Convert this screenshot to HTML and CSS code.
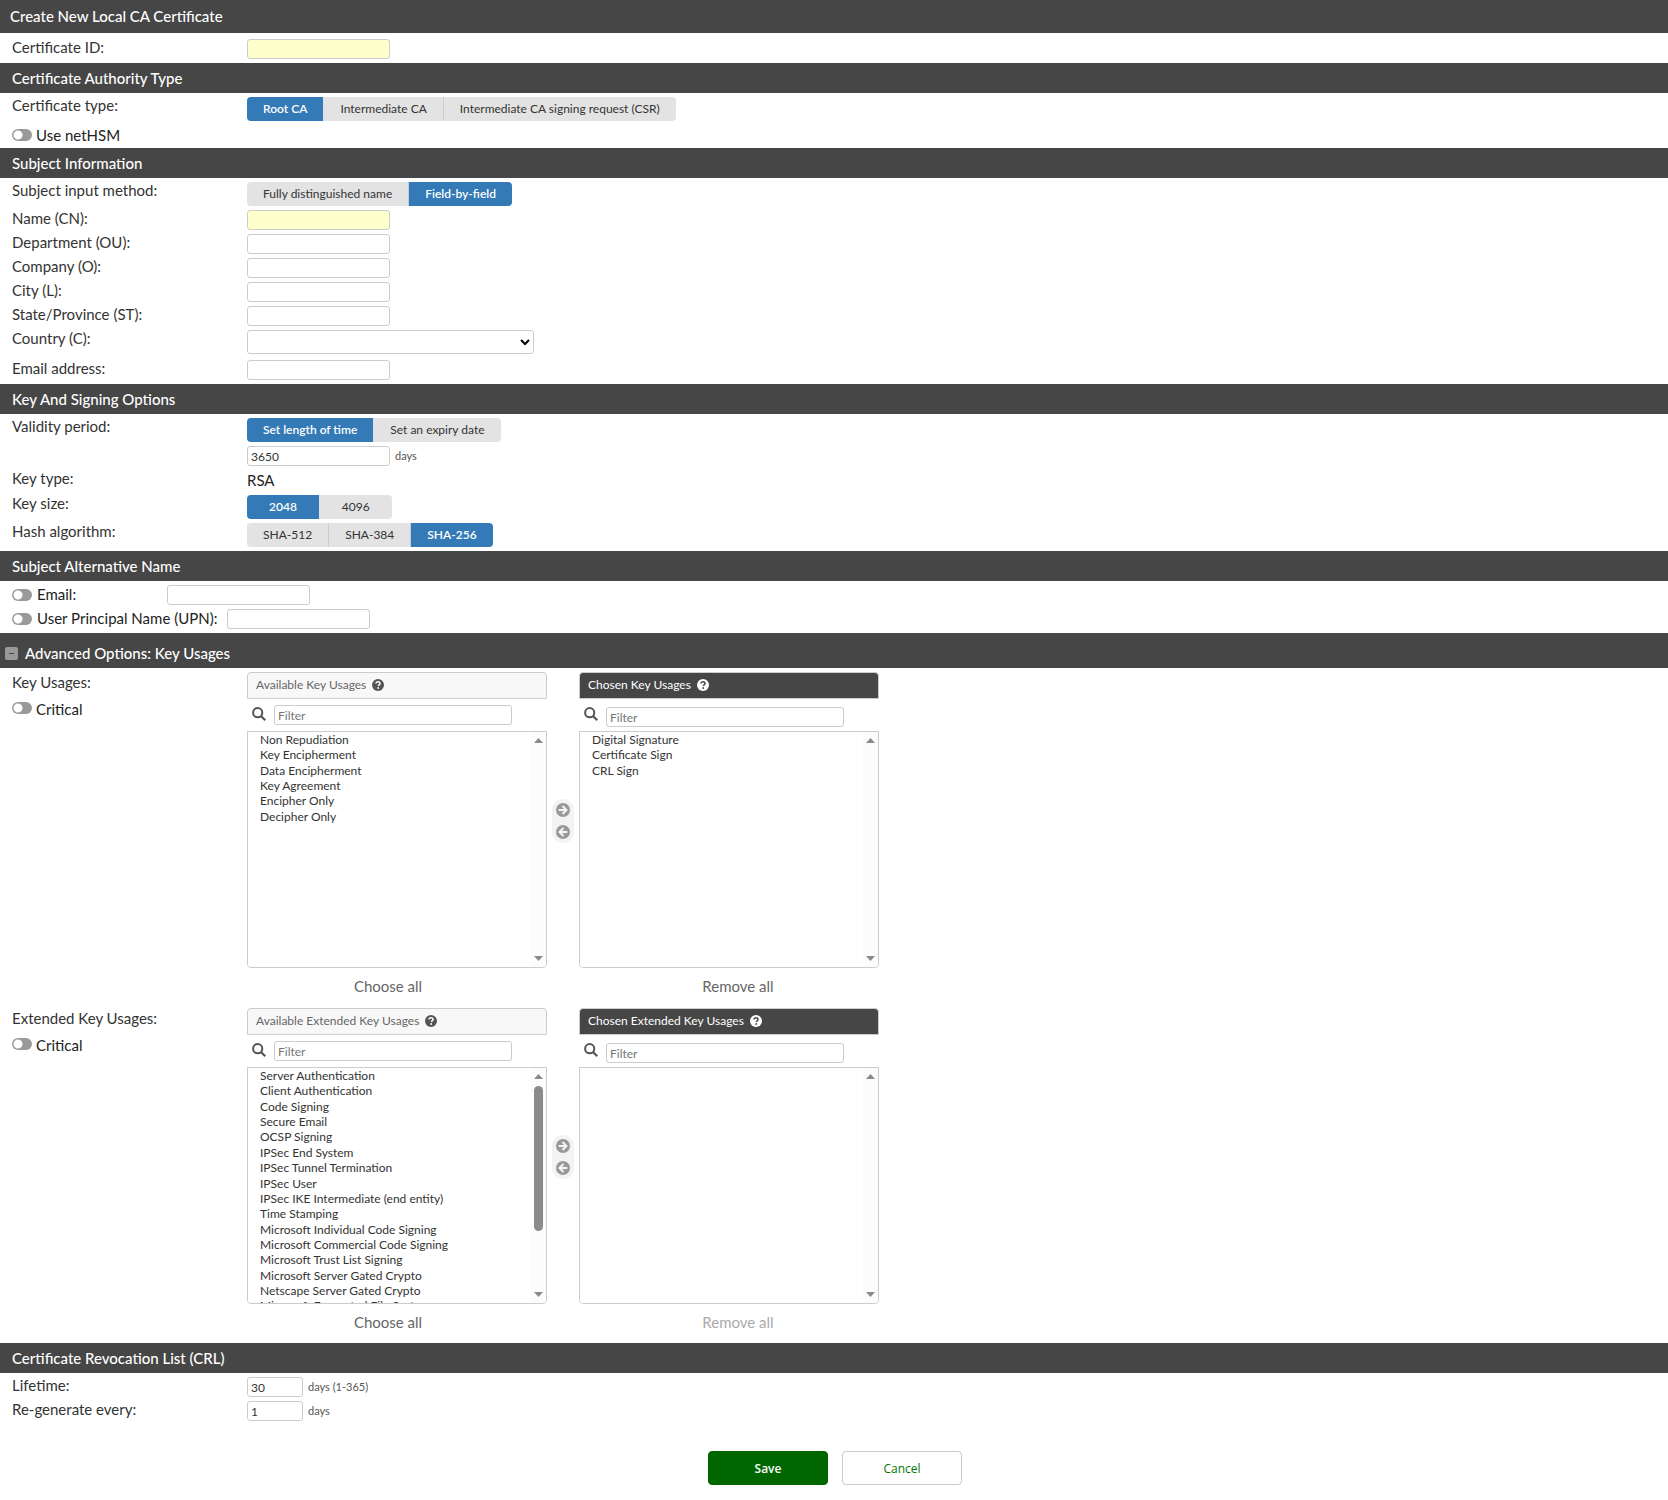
FILE: index.html
```html
<!DOCTYPE html>
<html lang="en">
<head>
<meta charset="utf-8">
<title>Create New Local CA Certificate</title>
<link rel="stylesheet" href="styles.css">
</head>
<body>
<svg class="sprite" aria-hidden="true">
  <symbol id="help" viewBox="0 0 12 12"><circle cx="6" cy="6" r="6" fill="currentColor"/><path class="help-mark" d="M4 4.6C4 3.4 4.9 2.8 6 2.8s2 .7 2 1.8C8 5.8 6.3 5.900 6.300 7.100" fill="none" stroke-width="1.500"/><circle class="help-dot" cx="6.200" cy="9" r=".9"/></symbol>
  <symbol id="search" viewBox="0 0 14 14"><circle cx="5.700" cy="5.700" r="4.600" fill="none" stroke="currentColor" stroke-width="2"/><path d="M9 9l4.200 4.200" stroke="currentColor" stroke-width="2.200"/></symbol>
  <symbol id="arrow" viewBox="0 0 14 14"><circle cx="7" cy="7" r="7" fill="currentColor"/><path d="M2.600 7h7.400M6.500 3L10.500 7l-4 4" fill="none" stroke="#f5f5f5" stroke-width="2"/></symbol>
  <symbol id="triangle" viewBox="0 0 9 5"><path d="M0 5L4.500 0 9 5z" fill="currentColor"/></symbol>
</svg>
<form>
  <h1 class="title">Create New Local CA Certificate</h1>
  <section class="fields fields-first">
    <div class="row"><label class="label" for="cert-id">Certificate ID:</label><input class="text required" id="cert-id" type="text"></div>
  </section>

  <h2 class="heading">Certificate Authority Type</h2>
  <section class="fields">
    <div class="row"><span class="label">Certificate type:</span>
      <div class="segments"><button type="button" class="segment on">Root CA</button><button type="button" class="segment">Intermediate CA</button><button type="button" class="segment">Intermediate CA signing request (CSR)</button></div>
    </div>
    <label class="switch"><input class="toggle" type="checkbox">Use netHSM</label>
  </section>

  <h2 class="heading">Subject Information</h2>
  <section class="fields">
    <div class="row"><span class="label">Subject input method:</span>
      <div class="segments"><button type="button" class="segment">Fully distinguished name</button><button type="button" class="segment on">Field-by-field</button></div>
    </div>
    <div class="row"><label class="label" for="cn">Name (CN):</label><input class="text required" id="cn" type="text"></div>
    <div class="row"><label class="label" for="ou">Department (OU):</label><input class="text" id="ou" type="text"></div>
    <div class="row"><label class="label" for="org">Company (O):</label><input class="text" id="org" type="text"></div>
    <div class="row"><label class="label" for="city">City (L):</label><input class="text" id="city" type="text"></div>
    <div class="row"><label class="label" for="state">State/Province (ST):</label><input class="text" id="state" type="text"></div>
    <div class="row row-country"><label class="label" for="country">Country (C):</label><select class="country" id="country"><option></option></select></div>
    <div class="row"><label class="label" for="email">Email address:</label><input class="text" id="email" type="text"></div>
  </section>

  <h2 class="heading">Key And Signing Options</h2>
  <section class="fields">
    <div class="row"><label class="label" for="days">Validity period:</label>
      <div class="stack">
        <div class="segments"><button type="button" class="segment on">Set length of time</button><button type="button" class="segment">Set an expiry date</button></div>
        <div class="inline"><input class="text" id="days" type="text" value="3650"><span class="unit">days</span></div>
      </div>
    </div>
    <div class="row"><span class="label">Key type:</span><span class="value">RSA</span></div>
    <div class="row"><span class="label">Key size:</span>
      <div class="segments"><button type="button" class="segment wide on">2048</button><button type="button" class="segment wide">4096</button></div>
    </div>
    <div class="row"><span class="label">Hash algorithm:</span>
      <div class="segments"><button type="button" class="segment">SHA-512</button><button type="button" class="segment">SHA-384</button><button type="button" class="segment on">SHA-256</button></div>
    </div>
  </section>

  <h2 class="heading">Subject Alternative Name</h2>
  <section class="fields">
    <div class="alt"><label class="switch alt-name"><input class="toggle" type="checkbox">Email:</label><input class="text" type="text" aria-label="Email"></div>
    <div class="alt"><label class="switch alt-name"><input class="toggle" type="checkbox">User Principal Name (UPN):</label><input class="text" type="text" aria-label="User Principal Name"></div>
  </section>

  <h2 class="heading heading-fold"><button type="button" class="fold" aria-label="Collapse"></button>Advanced Options: Key Usages</h2>
  <section class="fields usages">
    <div class="row">
      <div class="usage-side"><span class="label">Key Usages:</span><label class="switch"><input class="toggle" type="checkbox">Critical</label></div>
      <div class="picker">
        <div class="box">
          <label class="box-title" for="ku-from">Available Key Usages <svg class="help"><use href="#help"/></svg></label>
          <div class="filter"><svg class="search"><use href="#search"/></svg><input class="text" type="text" placeholder="Filter" aria-label="Filter available key usages"></div>
          <div class="list-frame">
            <select class="list" id="ku-from" multiple>
              <option>Non Repudiation</option><option>Key Encipherment</option><option>Data Encipherment</option><option>Key Agreement</option><option>Encipher Only</option><option>Decipher Only</option>
            </select>
            <div class="bar"><svg class="bar-end"><use href="#triangle"/></svg><svg class="bar-end down"><use href="#triangle"/></svg></div>
          </div>
          <button type="button" class="all all-from">Choose all</button>
        </div>
        <div class="movers"><button type="button" class="mover" aria-label="Choose"><svg class="arrow"><use href="#arrow"/></svg></button><button type="button" class="mover back" aria-label="Remove"><svg class="arrow"><use href="#arrow"/></svg></button></div>
        <div class="box chosen">
          <label class="box-title" for="ku-to">Chosen Key Usages <svg class="help"><use href="#help"/></svg></label>
          <div class="filter"><svg class="search"><use href="#search"/></svg><input class="text" type="text" placeholder="Filter" aria-label="Filter chosen key usages"></div>
          <div class="list-frame">
            <select class="list" id="ku-to" multiple>
              <option>Digital Signature</option><option>Certificate Sign</option><option>CRL Sign</option>
            </select>
            <div class="bar"><svg class="bar-end"><use href="#triangle"/></svg><svg class="bar-end down"><use href="#triangle"/></svg></div>
          </div>
          <button type="button" class="all all-to">Remove all</button>
        </div>
      </div>
    </div>
    <div class="row">
      <div class="usage-side"><span class="label">Extended Key Usages:</span><label class="switch"><input class="toggle" type="checkbox">Critical</label></div>
      <div class="picker">
        <div class="box">
          <label class="box-title" for="eku-from">Available Extended Key Usages <svg class="help"><use href="#help"/></svg></label>
          <div class="filter"><svg class="search"><use href="#search"/></svg><input class="text" type="text" placeholder="Filter" aria-label="Filter available extended key usages"></div>
          <div class="list-frame">
            <select class="list" id="eku-from" multiple>
              <option>Server Authentication</option><option>Client Authentication</option><option>Code Signing</option><option>Secure Email</option><option>OCSP Signing</option><option>IPSec End System</option><option>IPSec Tunnel Termination</option><option>IPSec User</option><option>IPSec IKE Intermediate (end entity)</option><option>Time Stamping</option><option>Microsoft Individual Code Signing</option><option>Microsoft Commercial Code Signing</option><option>Microsoft Trust List Signing</option><option>Microsoft Server Gated Crypto</option><option>Netscape Server Gated Crypto</option><option>Microsoft Encrypted File System</option><option>Microsoft EFS File Recovery</option><option>Smart Card Logon</option><option>EAP over PPP</option><option>EAP over LAN</option><option>KDC Authentication</option>
            </select>
            <div class="bar"><svg class="bar-end"><use href="#triangle"/></svg><div class="thumb"></div><svg class="bar-end down"><use href="#triangle"/></svg></div>
          </div>
          <button type="button" class="all all-from">Choose all</button>
        </div>
        <div class="movers"><button type="button" class="mover" aria-label="Choose"><svg class="arrow"><use href="#arrow"/></svg></button><button type="button" class="mover back" aria-label="Remove"><svg class="arrow"><use href="#arrow"/></svg></button></div>
        <div class="box chosen">
          <label class="box-title" for="eku-to">Chosen Extended Key Usages <svg class="help"><use href="#help"/></svg></label>
          <div class="filter"><svg class="search"><use href="#search"/></svg><input class="text" type="text" placeholder="Filter" aria-label="Filter chosen extended key usages"></div>
          <div class="list-frame">
            <select class="list" id="eku-to" multiple></select>
            <div class="bar"><svg class="bar-end"><use href="#triangle"/></svg><svg class="bar-end down"><use href="#triangle"/></svg></div>
          </div>
          <button type="button" class="all all-to" disabled>Remove all</button>
        </div>
      </div>
    </div>
  </section>

  <h2 class="heading">Certificate Revocation List (CRL)</h2>
  <section class="fields">
    <div class="row"><label class="label" for="life">Lifetime:</label><div class="inline"><input class="text short" id="life" type="text" value="30"><span class="unit">days (1-365)</span></div></div>
    <div class="row"><label class="label" for="regen">Re-generate every:</label><div class="inline"><input class="text short" id="regen" type="text" value="1"><span class="unit">days</span></div></div>
  </section>
  <div class="actions"><button type="submit" class="action save">Save</button><button type="button" class="action">Cancel</button></div>
</form>
</body>
</html>
```
FILE: styles.css
```css
* { box-sizing: border-box; }

body {
  margin: 0;
  background: #fff;
  color: #333;
  font: 15px/18px Lato, "Liberation Sans", sans-serif;
}

button, input, select { font: inherit; margin: 0; }
button { padding: 0; border: 0; background: none; color: inherit; cursor: pointer; }
.sprite { display: none; }

/* Section bars */
.title, .heading {
  margin: 0;
  background: #464646;
  color: #fff;
  font-size: 15px;
  font-weight: 500;
}
.title { padding: 7px 10px 8px; }
.heading { padding: 6px 12px; }
.heading-fold { display: flex; align-items: center; gap: 7px; padding: 11px 5px 6px; }
.fold {
  display: grid;
  place-items: center;
  width: 13px;
  height: 13px;
  border-radius: 2px;
  background: #999;
}
.fold::before { content: ""; width: 5px; height: 1px; background: #464646; }

/* Form rows */
.fields { display: flex; flex-direction: column; gap: 4px; padding: 4px 12px; }
.fields-first { padding-top: 6px; }
.row { display: grid; grid-template-columns: 235px 1fr; align-items: start; }
.row-country { padding-bottom: 2px; }
.label { line-height: 16px; }
.stack { display: grid; gap: 4px; }
.inline { display: flex; align-items: center; gap: 5px; }
.unit { color: #555; font-size: 11px; }
.value { padding-bottom: 1px; color: #222; line-height: 20px; }

.text {
  width: 143px;
  height: 20px;
  padding: 0 3px;
  border: 1px solid #ccc;
  border-radius: 3px;
  background: #fff;
  color: #333;
  font-size: 12px;
}
.text::placeholder { color: #757575; }
.required { background: #ffc; }
.short { width: 56px; }
.country {
  width: 287px;
  height: 24px;
  border: 1px solid #ccc;
  border-radius: 3px;
  background: #fff;
}

.segments { display: flex; }
.segment {
  height: 24px;
  padding: 0 16px;
  border-right: 1px solid #ccc;
  background: #e3e3e3;
  color: #333;
  font-size: 12px;
}
.segment:first-child { border-radius: 4px 0 0 4px; }
.segment:last-child { border-right: 0; border-radius: 0 4px 4px 0; }
.segment.on { border-color: #e3e3e3; background: #337ab7; color: #fff; font-weight: 600; }
.wide { padding: 0 22px; }

.switch { display: flex; align-items: center; gap: 4px; height: 19px; color: #222; }
.toggle {
  appearance: none;
  width: 20px;
  height: 12px;
  border-radius: 6px;
  background: radial-gradient(circle at 6px 6px, #fff 4px, #999 5px);
}
.alt { display: flex; align-items: center; gap: 10px; }
.alt-name { align-items: flex-start; gap: 5px; height: 20px; min-width: 145px; }
.alt-name .toggle { margin-top: 4px; }

/* Two-list pickers */
.usages { gap: 13px; padding-bottom: 12px; }
.usage-side { display: grid; gap: 10px; padding-top: 2px; }
.usage-side .switch { align-items: flex-start; }
.usage-side .toggle { margin-top: 2px; }
.picker { display: flex; }
.box { display: flex; flex-direction: column; width: 300px; }
.box-title {
  display: flex;
  align-items: center;
  gap: 6px;
  height: 27px;
  padding: 0 8px 2px;
  border: 1px solid #ccc;
  border-radius: 4px 4px 0 0;
  background: #f8f8f8;
  color: #666;
  font-size: 12px;
}
.chosen .box-title { background: #464646; color: #fff; }
.help { width: 12px; height: 12px; color: #555; }
.chosen .help { color: #fff; --mark: #464646; }
.help-mark { stroke: var(--mark, #fff); }
.help-dot { fill: var(--mark, #fff); }
.filter { display: flex; align-items: flex-start; gap: 8px; height: 32px; padding: 6px 5px; }
.filter .text { width: 238px; }
.chosen .filter .text { margin-top: 2px; }
.search { width: 14px; height: 14px; margin-top: 2px; color: #555; }

.list-frame {
  display: flex;
  height: 237px;
  border: 1px solid #ccc;
  border-radius: 0 0 4px 4px;
  overflow: hidden;
}
.list {
  flex: 1;
  height: 100%;
  padding: 0;
  border: 0;
  background: #fff;
  color: #333;
  font-size: 12px;
  outline: 0;
  scrollbar-width: none;
}
.list option { min-height: 1.28em; padding: 0 12px; }
.bar {
  display: flex;
  flex-direction: column;
  align-items: center;
  gap: 7px;
  width: 15px;
  padding: 6px 0;
  background: #fcfcfc;
  color: #8b8b8b;
}
.bar-end { width: 9px; height: 5px; }
.down { margin-top: auto; transform: rotate(180deg); }
.thumb { width: 9px; height: 145px; border-radius: 5px; background: #8b8b8b; }

.all { margin-top: 9px; color: #666; }
.all-from { padding-right: 18px; }
.all-to { padding-left: 18px; }
.all:disabled { color: #aaa; }

.movers {
  display: flex;
  flex-direction: column;
  align-self: flex-start;
  gap: 8px;
  margin: 127px 5px 0;
  padding: 4px;
  border-radius: 11px;
  background: #f3f3f3;
}
.mover { display: flex; }
.arrow { width: 14px; height: 14px; color: #999; }
.back { transform: scaleX(-1); }

/* Form buttons */
.actions { display: flex; justify-content: center; gap: 14px; padding: 26px 0 15px 2px; }
.action {
  width: 120px;
  height: 34px;
  border: 1px solid #ccc;
  border-radius: 4px;
  background: #fff;
  color: #070;
  font: 12px "Open Sans", "Noto Sans", sans-serif;
}
.save { border-color: #060; background: #060; color: #fff; font-weight: 600; }
```
